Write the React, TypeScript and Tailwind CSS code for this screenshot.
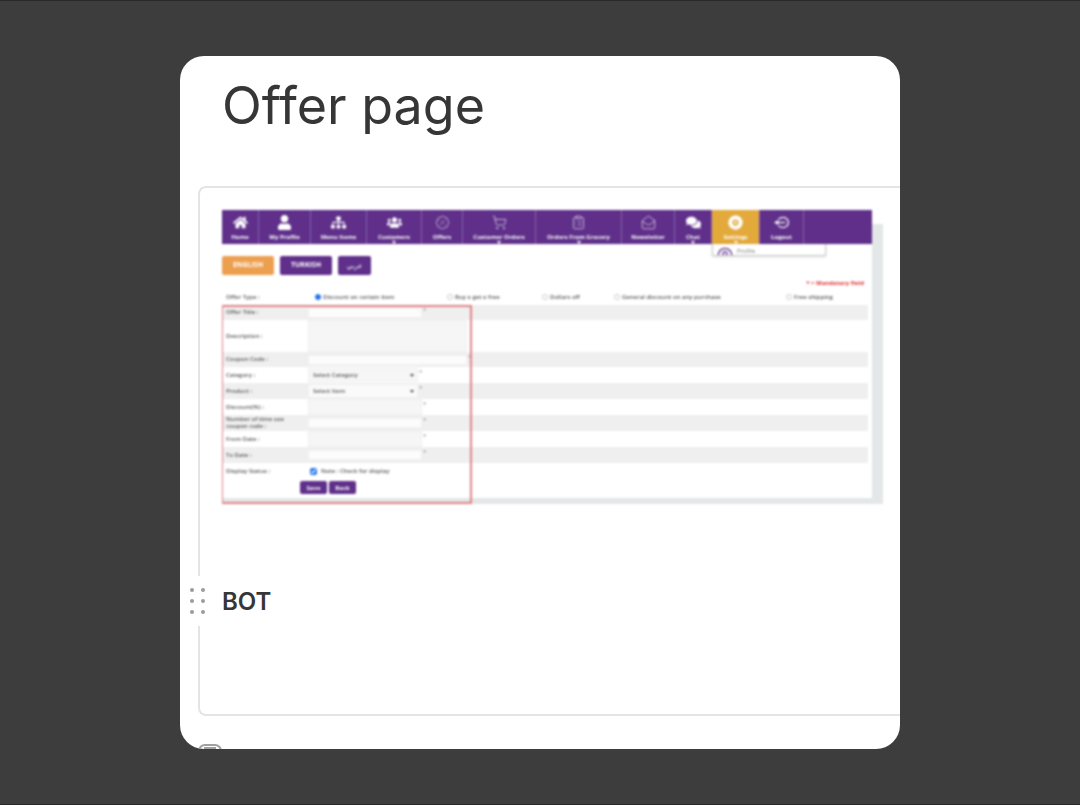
import type { ReactNode } from "react";
import { FaHome, FaUser, FaSitemap, FaUsers, FaComments } from "react-icons/fa";
import { BadgePercent, ShoppingCart, ClipboardList, MailOpen, CircleUser } from "lucide-react";

type IconProps = { className?: string };

const SettingsIcon = ({ className }: IconProps) => (
  <svg viewBox="0 0 24 24" className={className}>
    <circle cx="12" cy="12" r="8" fill="none" stroke="#fff" strokeWidth="6" />
    <circle cx="12" cy="12" r="10.5" fill="none" stroke="#fff" strokeWidth="2" strokeDasharray="4 2" />
    <circle cx="12" cy="12" r="2" fill="#fff" />
  </svg>
);

const LogoutIcon = ({ className }: IconProps) => (
  <svg viewBox="0 0 24 24" className={className} fill="none" stroke="#fff" strokeWidth="2">
    <path d="M7 7a9 8 0 1 1 0 10" />
    <path d="M18 12H3" />
    <path d="M7 8v8l-7-4z" fill="#fff" stroke="none" />
  </svg>
);

const navItems = [
  { icon: FaHome, label: "Home", width: "w-[37px]" },
  { icon: FaUser, label: "My Profile", width: "w-[52px]" },
  { icon: FaSitemap, label: "Menu Items", width: "w-[56px]" },
  { icon: FaUsers, label: "Customers", width: "w-[55px]", menu: true },
  { icon: BadgePercent, label: "Offers", width: "w-[41px]" },
  { icon: ShoppingCart, label: "Customer Orders", width: "w-[73px]", menu: true },
  { icon: ClipboardList, label: "Orders From Grocery", width: "w-[86px]", menu: true },
  { icon: MailOpen, label: "Newsletter", width: "w-[53px]" },
  { icon: FaComments, label: "Chat", width: "w-[37px]", menu: true },
  { icon: SettingsIcon, label: "Settings", width: "w-[48px]", menu: true, active: true },
  { icon: LogoutIcon, label: "Logout", width: "w-[44px]" },
];

const offerTypes = [
  { label: "Discount on certain item", width: "w-[132px]" },
  { label: "Buy x get x free", width: "w-[95px]" },
  { label: "Dollars off", width: "w-[72px]" },
  { label: "General discount on any purchase", width: "w-[172px]" },
  { label: "Free shipping", width: "w-[60px]" },
];

const Star = () => <span className="ml-px self-start pt-px text-[6px] leading-[8px] text-[#b07070]">*</span>;

type RowProps = { id: string; label: string; height: string; striped?: boolean; children: ReactNode };

const Row = ({ id, label, height, striped, children }: RowProps) => (
  <div className={`mr-1 flex items-center ${height} ${striped ? "bg-[#efefef]" : "bg-white"}`}>
    <label htmlFor={id} className="w-[86px] shrink-0 pl-1 pr-4 text-[6px] font-semibold leading-[7px] text-[#555]">
      {label}
    </label>
    {children}
  </div>
);

const TextRow = ({ id, label, height, striped, wide }: { id: string; label: string; height: string; striped?: boolean; wide?: boolean }) => (
  <Row id={id} label={label} height={height} striped={striped}>
    <input id={id} type="text" className={`border border-[#f0f0f0] px-1 text-[6px] ${wide ? "w-[159px]" : "w-[114px]"} ${striped ? "h-[10px] bg-[#fcfcfc]" : "h-4 bg-[#f6f6f6]"}`} />
    <Star />
  </Row>
);

const SelectRow = ({ id, label, option, striped }: { id: string; label: string; option: string; striped?: boolean }) => (
  <Row id={id} label={label} height="h-4" striped={striped}>
    <div className="relative">
      <select id={id} className={`block h-[14px] w-[110px] appearance-none border border-[#f0f0f0] px-1 text-[6px] font-semibold leading-[8px] text-[#555] ${striped ? "bg-[#fafafa]" : "bg-[#f6f6f6]"}`}>
        <option>{option}</option>
      </select>
      <svg viewBox="0 0 6 4" className="pointer-events-none absolute right-1 top-1.5 h-[3px] w-1">
        <path d="M0 0h6L3 4z" fill="#333" />
      </svg>
    </div>
    <Star />
  </Row>
);

const NavBar = () => (
  <nav className="relative mr-[11px] flex h-[34px] bg-[#5f2f8a]">
    {navItems.map((item) => (
      <a key={item.label} href="#" className={`relative flex shrink-0 flex-col items-center border-r border-[#8661a8] pt-[5px] text-white ${item.width} ${item.active ? "bg-[#e3a93b]" : ""}`}>
        <item.icon className="size-[15px]" strokeWidth={1} />
        <span className="mt-[3px] whitespace-nowrap text-[6px] font-bold leading-[8px]">{item.label}</span>
        {item.menu && (
          <svg viewBox="0 0 4 3" className="absolute bottom-0 h-[3px] w-1">
            <path d="M0 0h4L2 3z" fill="#fff" />
          </svg>
        )}
      </a>
    ))}
    <div className="absolute left-[490px] top-full flex h-[12px] w-[114px] gap-1 overflow-hidden border border-t-0 border-[#c9c9c9] bg-white pl-1 pt-[3px] shadow-sm">
      <CircleUser className="size-4 shrink-0 text-[#5f2f8a]" />
      <span className="text-[6px] leading-[8px] text-[#777]">Profile</span>
    </div>
  </nav>
);

const OfferForm = () => (
  <div className="relative bg-white font-['Open_Sans',sans-serif] blur-[1px]">
    <NavBar />
    <div className="mr-[11px] flex gap-1.5 pt-3">
      <button className="h-[19px] w-[52px] rounded-xs bg-[#ec9f4f] text-[7px] font-bold text-white">ENGLISH</button>
      <button className="h-[19px] w-[52px] rounded-xs bg-[#5f2f8a] text-[7px] font-bold text-white">TURKISH</button>
      <button className="h-[19px] w-[33px] rounded-xs bg-[#5f2f8a] font-['DejaVu_Sans',sans-serif] text-[7px] leading-[8px] text-white">عربي</button>
    </div>
    <p className="mr-[19px] h-[13px] pt-1 text-right text-[6px] font-bold leading-[8px] text-[#e02f2f]">* = Mandatory field</p>
    <form>
      <fieldset className="mr-[11px] flex h-[17px] items-center pl-1">
        <legend className="float-left w-[89px] text-[6px] font-semibold leading-[8px] text-[#555]">Offer Type :</legend>
        {offerTypes.map((type, index) => (
          <label key={type.label} className={`flex shrink-0 items-center gap-0.5 whitespace-nowrap text-[6px] font-semibold leading-[8px] text-[#555] ${type.width}`}>
            <input type="radio" name="offerType" defaultChecked={index === 0} className="size-1.5 appearance-none rounded-full border border-[#ccc] checked:border-[#2374e8] checked:bg-[#2374e8]" />
            {type.label}
          </label>
        ))}
      </fieldset>
      <div className="relative border-b-[6px] border-[#e3e7e7]">
        <div className="mr-[11px]">
          <TextRow id="title" label="Offer Title :" height="h-[15px]" striped />
          <Row id="description" label="Description :" height="h-8">
            <textarea id="description" className="block h-8 w-[159px] resize-none border border-[#f0f0f0] bg-[#f6f6f6] p-1 text-[6px]" />
          </Row>
          <TextRow id="coupon" label="Coupon Code :" height="h-[15px]" striped wide />
          <SelectRow id="category" label="Category :" option="Select Category" />
          <SelectRow id="product" label="Product :" option="Select Item" striped />
          <TextRow id="discount" label="Discount(%) :" height="h-4" />
          <TextRow id="uses" label="Number of time use coupon code :" height="h-4" striped />
          <TextRow id="from" label="From Date :" height="h-4" />
          <TextRow id="to" label="To Date :" height="h-4" striped />
          <Row id="status" label="Display Status :" height="h-4">
            <input id="status" type="checkbox" defaultChecked className="ml-0.5 size-[7px] accent-[#2374e8]" />
            <span className="ml-1 text-[6px] font-semibold leading-[8px] text-[#555]">Note : Check for display</span>
          </Row>
          <div className="flex gap-0.5 pb-1 pl-[78px] pt-0.5">
            <button type="button" className="h-[13px] w-[27px] rounded-xs bg-[#5f2f8a] text-[6px] font-bold leading-[8px] text-white">Save</button>
            <button type="button" className="h-[13px] w-[27px] rounded-xs bg-[#5f2f8a] text-[6px] font-bold leading-[8px] text-white">Back</button>
          </div>
        </div>
        <div className="pointer-events-none absolute -bottom-1.5 left-0 top-0 w-[250px] border-2 border-l border-[#e28383]" />
      </div>
    </form>
    {/* page scrollbar */}
    <div className="absolute bottom-0 right-0 top-[14px] w-[11px] bg-[#e3e7e7]" />
  </div>
);

const DragHandle = () => (
  <button aria-label="Move block" className="absolute -left-8 top-0 grid h-[50px] grid-cols-2 content-center gap-x-[7px] gap-y-[7px] bg-white">
    {[0, 1, 2, 3, 4, 5].map((dot) => (
      <span key={dot} className="size-1 rounded-full bg-[#9b9b9b]" />
    ))}
  </button>
);

const App = () => (
  <div className="min-h-screen border-y border-[#292929] bg-[#3d3d3d] py-[55px] font-['Inter',sans-serif] text-[#363636]">
    <main className="mx-auto w-2/3 overflow-hidden rounded-3xl bg-white pl-[18px]">
      <h1 className="h-[130px] whitespace-nowrap pl-6 pt-4 text-[52px] leading-[68px]">Offer page</h1>
      <section className="rounded-l-lg border-2 border-r-0 border-[#e4e4e4] pb-[86px] pl-[22px] pt-[22px]">
        <div className="mr-[17px]">
          <OfferForm />
        </div>
        <div className="relative mt-[72px] flex h-[52px] items-center">
          <DragHandle />
          <h2 className="text-2xl font-semibold">BOT</h2>
        </div>
      </section>
      <div className="h-[33px] overflow-hidden pt-7">
        <svg viewBox="0 0 24 24" className="size-6" fill="none" stroke="#a0a0a0" strokeWidth="2">
          <rect x="1" y="1" width="22" height="22" rx="6" />
          <path d="M6 4h12" />
        </svg>
      </div>
    </main>
  </div>
);

export default App;
